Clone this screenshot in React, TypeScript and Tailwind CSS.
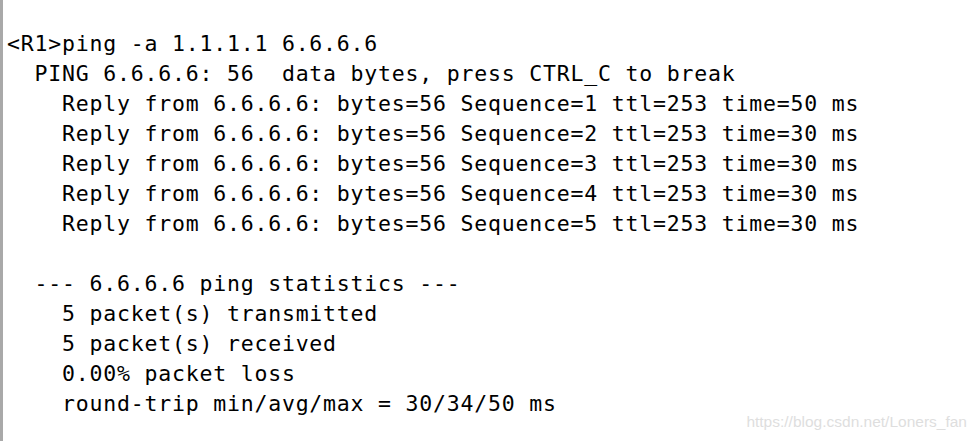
const lines = [
  "<R1>ping -a 1.1.1.1 6.6.6.6",
  "  PING 6.6.6.6: 56  data bytes, press CTRL_C to break",
  "    Reply from 6.6.6.6: bytes=56 Sequence=1 ttl=253 time=50 ms",
  "    Reply from 6.6.6.6: bytes=56 Sequence=2 ttl=253 time=30 ms",
  "    Reply from 6.6.6.6: bytes=56 Sequence=3 ttl=253 time=30 ms",
  "    Reply from 6.6.6.6: bytes=56 Sequence=4 ttl=253 time=30 ms",
  "    Reply from 6.6.6.6: bytes=56 Sequence=5 ttl=253 time=30 ms",
  "",
  "  --- 6.6.6.6 ping statistics ---",
  "    5 packet(s) transmitted",
  "    5 packet(s) received",
  "    0.00% packet loss",
  "    round-trip min/avg/max = 30/34/50 ms",
];

export default function App() {
  return (
    <div className="relative w-[976px] h-[441px] bg-white overflow-hidden border-l-[3px] border-[#a9a9a9]">
      {/* terminal output */}
      <pre className="pt-[29px] pl-[4px] font-['DejaVu_Sans_Mono',monospace] text-[21.5px] leading-[30px] tracking-[0.8px] text-black">
        {lines.map((l, i) => (
          <div key={i} className="h-[30px] whitespace-pre">
            {l}
          </div>
        ))}
      </pre>

      {/* watermark */}
      <div className="absolute right-[9px] top-[412px] font-['Liberation_Sans',Arial,sans-serif] text-[15.5px] leading-[20px] text-[#dedede]">
        https://blog.csdn.net/Loners_fan
      </div>
    </div>
  );
}
